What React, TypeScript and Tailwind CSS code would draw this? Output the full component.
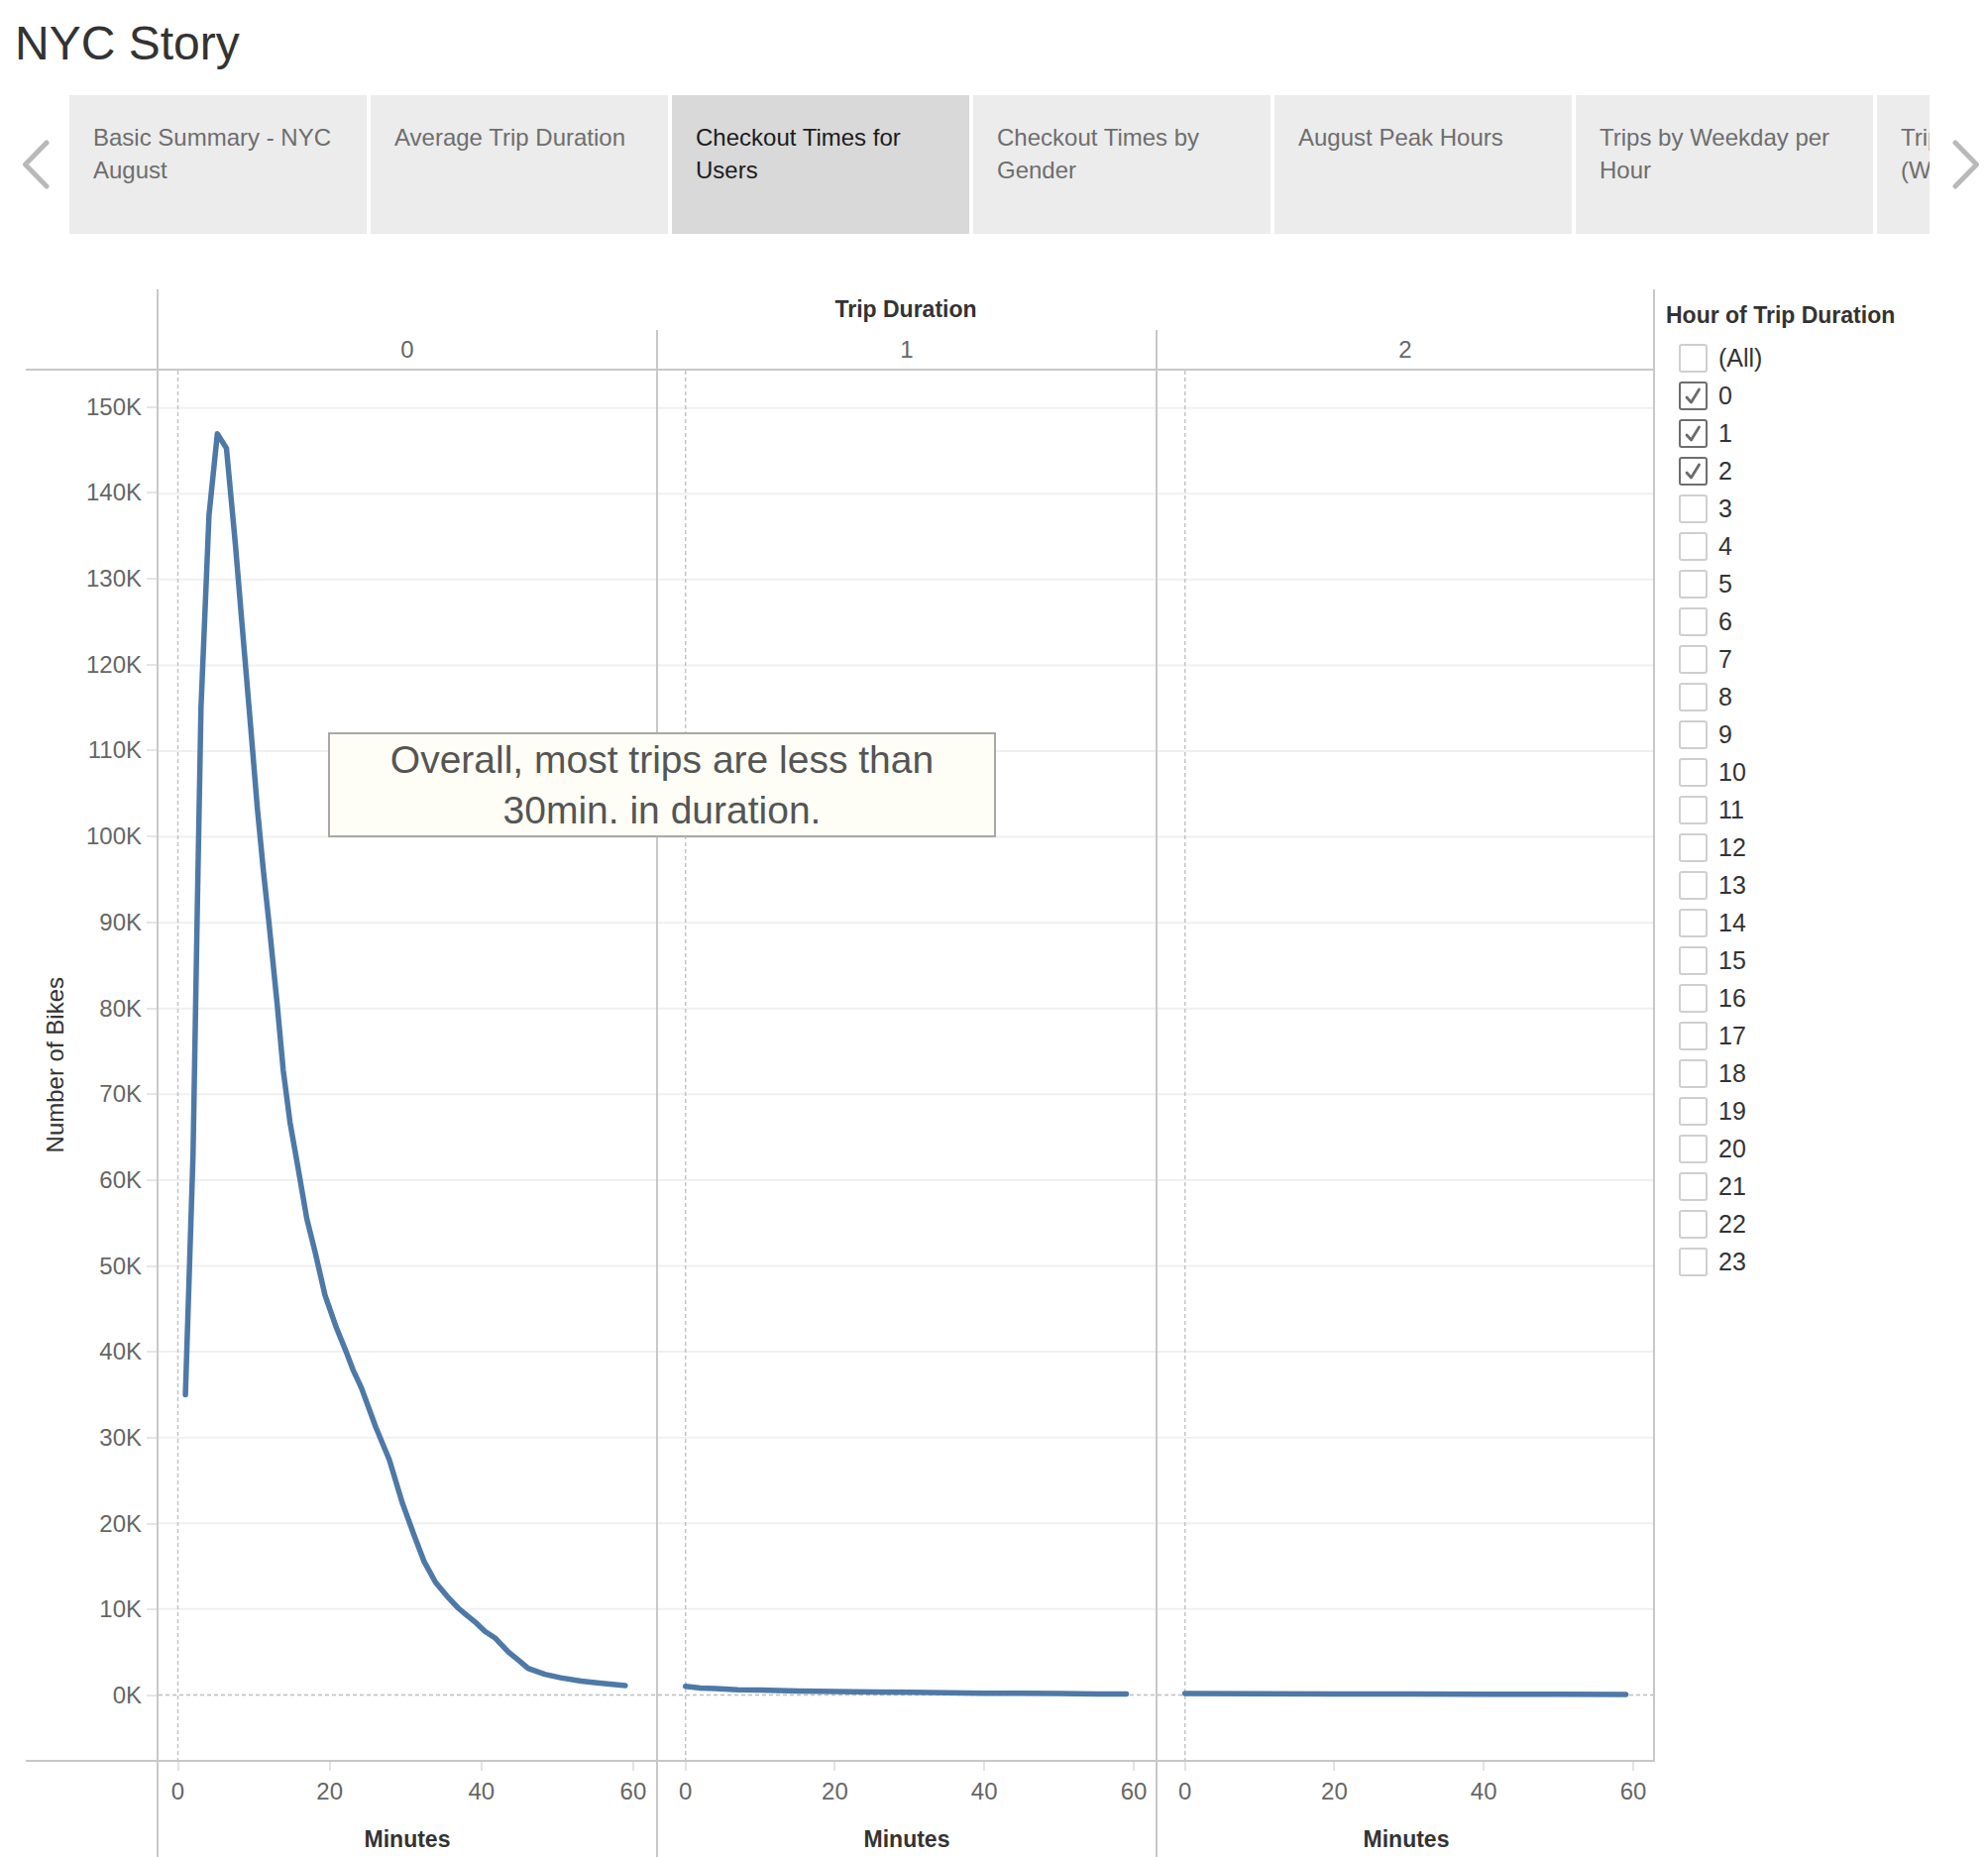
import React from 'react'

type Pt = [number, number]

// minute, thousands of bikes
const HOUR0: Pt[] = [
  [1.0, 35], [2.0, 63], [2.6, 93.6], [3.05, 115], [4.1, 137.5], [5.2, 147], [6.4, 145.3],
  [7.6, 134], [8.5, 124.4], [9.6, 112.9], [10.5, 103.2], [11.3, 95.9], [12.0, 90.1],
  [13.1, 80.5], [13.9, 72.8], [14.8, 66.7], [15.9, 61.2], [17.0, 55.5], [18.1, 51.6],
  [19.4, 46.6], [20.9, 42.8], [22.2, 40.0], [23.1, 37.9], [24.2, 35.8], [26.1, 31.2],
  [27.9, 27.4], [29.6, 22.4], [31.2, 18.5], [32.5, 15.5], [34, 13.1], [35.5, 11.5],
  [37, 10.1], [38.2, 9.2], [39.2, 8.5], [40.5, 7.4], [41.9, 6.6], [43.6, 5.0], [45, 4.0],
  [46.2, 3.1], [48.4, 2.4], [50.5, 2.0], [53.2, 1.6], [55.3, 1.4], [59, 1.1],
]

const HOUR1: Pt[] = [
  [0, 1.0], [2, 0.8], [4, 0.75], [7, 0.6], [10, 0.55], [15, 0.45], [20, 0.4], [25, 0.35],
  [30, 0.3], [35, 0.25], [40, 0.2], [45, 0.18], [50, 0.15], [55, 0.12], [59, 0.1],
]

const HOUR2: Pt[] = [
  [0, 0.15], [10, 0.13], [20, 0.11], [30, 0.1], [40, 0.08], [50, 0.07], [59, 0.05],
]

const PLOT_H = 1402
const ZERO_Y = 1336.4
const PX_PER_K = 8.658
const yOf = (k: number) => ZERO_Y - PX_PER_K * k

const TABS = [
  ['Basic Summary - NYC', 'August'],
  ['Average Trip Duration'],
  ['Checkout Times for', 'Users'],
  ['Checkout Times by', 'Gender'],
  ['August Peak Hours'],
  ['Trips by Weekday per', 'Hour'],
  ['Trips by Gender', '(Weekday per Hour)'],
]

const Y_TICKS = ['150K', '140K', '130K', '120K', '110K', '100K', '90K', '80K', '70K', '60K', '50K', '40K', '30K', '20K', '10K', '0K']

const HOURS = ['(All)', ...Array.from({ length: 24 }, (_, i) => String(i))]
const CHECKED = new Set(['0', '1', '2'])

function Chevron({ flip }: { flip?: boolean }) {
  return (
    <svg width="28" height="50" viewBox="0 0 28 50" className={flip ? 'rotate-180' : ''}>
      <path d="M25 3 L3.5 25 L25 47" fill="none" stroke="#b9b9b9" strokeWidth="5" strokeLinecap="round" strokeLinejoin="round" />
    </svg>
  )
}

function PanePlot({ width, x0, step, data }: { width: number; x0: number; step: number; data: Pt[] }) {
  const xOf = (m: number) => x0 + step * m
  const d = data.map(([m, k], i) => `${i ? 'L' : 'M'}${xOf(m).toFixed(1)} ${yOf(k).toFixed(1)}`).join(' ')
  return (
    <svg width={width} height={PLOT_H} className="block">
      {Array.from({ length: 15 }, (_, i) => (
        <line key={i} x1={0} x2={width} y1={yOf((i + 1) * 10)} y2={yOf((i + 1) * 10)} stroke="#f0f0f0" strokeWidth={2} />
      ))}
      <line x1={0} x2={width} y1={ZERO_Y} y2={ZERO_Y} stroke="#bdbdbd" strokeWidth={1.5} strokeDasharray="4 3" />
      <line x1={x0} x2={x0} y1={0} y2={PLOT_H} stroke="#c4c4c4" strokeWidth={1.5} strokeDasharray="4 3" />
      <path d={d} fill="none" stroke="#4e79a7" strokeWidth={5.5} strokeLinecap="round" strokeLinejoin="round" />
    </svg>
  )
}

function XTicks({ pl, pr }: { pl: string; pr: string }) {
  return (
    <div className={`flex justify-between ${pl} ${pr}`}>
      {['0', '20', '40', '60'].map((t) => (
        <div key={t} className="w-[36px] flex flex-col items-center">
          <div className="w-[2px] h-[9px] bg-[#e3e3e3]" />
          <span className="mt-[7px] text-[24px] leading-[28px] text-[#666]">{t}</span>
        </div>
      ))}
    </div>
  )
}

function FilterPanel() {
  return (
    <div className="flex-1 pl-[11px] pt-[11px]">
      <div className="text-[23px] leading-[30px] font-bold text-[#333]">Hour of Trip Duration</div>
      <div className="mt-[9px] pl-[13px]">
        {HOURS.map((h) => {
          const on = CHECKED.has(h)
          return (
            <div key={h} className="flex items-center h-[38px]">
              <div
                className={`w-[29px] h-[29px] rounded-[3px] border-2 flex items-center justify-center ${
                  on ? 'border-[#6e6e6e]' : 'border-[#cfcfcf]'
                }`}
              >
                {on && (
                  <svg width="25" height="25" viewBox="0 0 25 25">
                    <path d="M6 14 L10.5 19 L18.5 6" fill="none" stroke="#6b6b6b" strokeWidth="2.8" strokeLinecap="round" strokeLinejoin="round" />
                  </svg>
                )}
              </div>
              <span className="ml-[11px] text-[25px] leading-[30px] text-[#333]">{h}</span>
            </div>
          )
        })}
      </div>
    </div>
  )
}

export default function App() {
  const line = 'border-[#c8c8c8]'
  return (
    <div className="w-[2006px] h-[1874px] overflow-hidden bg-white font-['Liberation_Sans',Arial,sans-serif]">
      <h1 className="pl-[15px] pt-[20px] text-[48px] leading-[48px] font-normal text-[#333]">NYC Story</h1>

      {/* story points */}
      <div className="mt-[28px] flex items-center h-[140px]">
        <div className="w-[70px] pl-[22px] flex">
          <Chevron />
        </div>
        <div className="w-[1877px] h-full flex gap-[4px] overflow-hidden">
          {TABS.map((lines, i) => (
            <div
              key={i}
              className={`w-[300px] shrink-0 h-full pl-[24px] pt-[26px] text-[24px] leading-[33px] whitespace-nowrap ${
                i === 2 ? 'bg-[#d9d9d9] text-[#1c1c1c]' : 'bg-[#ececec] text-[#6e6e6e]'
              }`}
            >
              {lines.map((l) => (
                <div key={l}>{l}</div>
              ))}
            </div>
          ))}
        </div>
        <div className="flex-1 pl-[23px] flex">
          <Chevron flip />
        </div>
      </div>

      <div className="mt-[56px] flex">
        <div className="relative ml-[26px] w-[1644px] grid grid-cols-[132px_504px_504px_504px] grid-rows-[41px_41px_1402px_58px_44px]">
          {/* row 1 */}
          <div />
          <div className={`col-span-3 border-l-2 border-r-2 ${line} flex items-center justify-center text-[23px] font-bold text-[#333]`}>
            Trip Duration
          </div>

          {/* row 2 */}
          <div className={`border-b-2 ${line}`} />
          {['0', '1', '2'].map((p, i) => (
            <div
              key={p}
              className={`border-l-2 border-b-2 ${i === 2 ? 'border-r-2' : ''} ${line} flex items-center justify-center text-[24px] text-[#666]`}
            >
              {p}
            </div>
          ))}

          {/* row 3: axis + panes */}
          <div className="flex">
            <div className="w-[63px] flex items-center justify-center">
              <span className="[writing-mode:vertical-rl] rotate-180 text-[24px] text-[#333] whitespace-nowrap">Number of Bikes</span>
            </div>
            <div className="flex-1 flex flex-col justify-between pt-[21.7px] pb-[50px]">
              {Y_TICKS.map((t) => (
                <div key={t} className="h-[30px] flex items-center justify-end">
                  <span className="text-[24px] leading-[30px] text-[#666]">{t}</span>
                  <div className="ml-[5px] w-[10px] h-[2px] bg-[#e6e6e6]" />
                </div>
              ))}
            </div>
          </div>
          <div className={`border-l-2 ${line}`}>
            <PanePlot width={502} x0={19.5} step={7.65} data={HOUR0} />
          </div>
          <div className={`border-l-2 ${line}`}>
            <PanePlot width={502} x0={27.7} step={7.54} data={HOUR1} />
          </div>
          <div className={`border-l-2 border-r-2 ${line}`}>
            <PanePlot width={500} x0={27.7} step={7.54} data={HOUR2} />
          </div>

          {/* row 4: x ticks */}
          <div className={`border-t-2 ${line}`} />
          <div className={`border-l-2 border-t-2 ${line}`}>
            <XTicks pl="pl-[1.5px]" pr="pr-[5px]" />
          </div>
          <div className={`border-l-2 border-t-2 ${line}`}>
            <XTicks pl="pl-[9.7px]" pr="pr-[4px]" />
          </div>
          <div className={`border-l-2 border-t-2 ${line}`}>
            <XTicks pl="pl-[9.7px]" pr="pr-[4px]" />
          </div>

          {/* row 5 */}
          <div />
          {[0, 1, 2].map((i) => (
            <div key={i} className={`border-l-2 ${line} flex items-center justify-center text-[23px] font-bold text-[#333]`}>
              Minutes
            </div>
          ))}

          {/* annotation */}
          <div className="absolute left-[305px] top-[447px] w-[674px] h-[106px] border-2 border-[#a8a8a8] bg-[#fefef6] flex items-center justify-center text-center text-[39px] leading-[51px] text-[#555]">
            Overall, most trips are less than
            <br />
            30min. in duration.
          </div>
        </div>

        <FilterPanel />
      </div>
    </div>
  )
}
